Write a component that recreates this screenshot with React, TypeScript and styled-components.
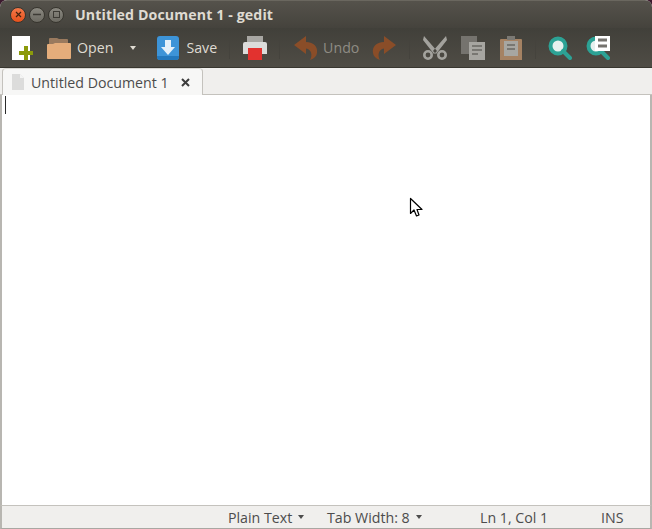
import React from 'react';
import styled, { createGlobalStyle } from 'styled-components';

const GlobalStyle = createGlobalStyle`
  html, body {
    margin: 0;
    padding: 0;
    background: #3c1a2e;
  }
  body {
    width: 652px;
    height: 529px;
    overflow: hidden;
    font-family: "Open Sans", "Noto Sans", sans-serif;
  }
`;

const Window = styled.div`
  position: relative;
  width: 652px;
  height: 529px;
  display: flex;
  flex-direction: column;
  border-radius: 7px 7px 0 0;
  overflow: hidden;
  background: #f2f1f0;
`;

const TitleBar = styled.div`
  height: 28px;
  flex: none;
  display: flex;
  align-items: center;
  padding: 0 0 0 10px;
  box-sizing: border-box;
  background: linear-gradient(#55524b, #45433d);
  border-top: 1px solid #6a675f;
`;

const WinButton = styled.div<{ $close?: boolean }>`
  width: 16px;
  height: 16px;
  box-sizing: border-box;
  margin-right: 3px;
  border-radius: 50%;
  display: flex;
  align-items: center;
  justify-content: center;
  border: 1px solid #38362f;
  background: ${(p) =>
    p.$close
      ? 'linear-gradient(#f4794a, #e6511c)'
      : 'linear-gradient(#8a8880, #6c6a62)'};
  svg {
    display: block;
  }
`;

const Title = styled.div`
  margin-left: 8px;
  color: #dfdbd2;
  font-size: 14.2px;
  font-weight: 700;
  letter-spacing: 0.1px;
  white-space: nowrap;
`;

const ToolBar = styled.div`
  height: 40px;
  flex: none;
  display: flex;
  align-items: center;
  padding-left: 12px;
  box-sizing: border-box;
  background: linear-gradient(#41403a, #4f4c45);
  border-bottom: 1px solid #38362f;
`;

const ToolIcon = styled.svg<{ $ml?: number }>`
  display: block;
  flex: none;
  margin-left: ${(p) => p.$ml ?? 0}px;
`;

const ToolLabel = styled.span<{ $ml: number; $dim?: boolean }>`
  margin-left: ${(p) => p.$ml}px;
  font-size: 14.2px;
  color: ${(p) => (p.$dim ? '#8f8c84' : '#dfdbd2')};
  white-space: nowrap;
`;

const ToolSeparator = styled.div<{ $ml: number }>`
  width: 1px;
  height: 22px;
  flex: none;
  margin-left: ${(p) => p.$ml}px;
  background: #45433d;
`;

const ToolCaret = styled.div`
  width: 0;
  height: 0;
  flex: none;
  margin-left: 17px;
  margin-top: 1px;
  border-left: 3.5px solid transparent;
  border-right: 3.5px solid transparent;
  border-top: 4px solid #dfdbd2;
`;

const TabBar = styled.div`
  position: relative;
  height: 27px;
  flex: none;
  display: flex;
  align-items: flex-end;
  box-sizing: border-box;
  padding-left: 2px;
  background: #f0efed;
  border-bottom: 1px solid #c4c2bd;
`;

const Tab = styled.div`
  width: 201px;
  height: 27px;
  margin-bottom: -1px;
  box-sizing: border-box;
  display: flex;
  align-items: center;
  padding-left: 9px;
  background: #f7f7f6;
  border: 1px solid #c4c2bd;
  border-bottom: none;
  border-top: 1px solid #d8d6d2;
  border-radius: 4px 4px 0 0;
  position: relative;
  z-index: 1;
`;

const TabLabel = styled.span`
  margin-left: 7px;
  font-size: 14.2px;
  color: #4c4c4c;
  white-space: nowrap;
`;

const TabClose = styled.svg`
  position: absolute;
  right: 12px;
  top: 9px;
`;

const Editor = styled.div`
  position: relative;
  flex: 1;
  background: #ffffff;
  border-left: 2px solid #b8b6b1;
  border-right: 2px solid #b8b6b1;
`;

const Caret = styled.div`
  position: absolute;
  left: 3px;
  top: 1px;
  width: 1px;
  height: 18px;
  background: #2b2b2b;
`;

const Pointer = styled.svg`
  position: absolute;
  left: 407px;
  top: 102px;
`;

const StatusBar = styled.div`
  height: 24px;
  flex: none;
  box-sizing: border-box;
  display: flex;
  align-items: center;
  padding-left: 226px;
  background: #f0efed;
  border-top: 1px solid #c4c2bd;
  border-bottom: 1px solid #a9a7a2;
  border-left: 2px solid #b8b6b1;
  border-right: 2px solid #b8b6b1;
`;

const StatusText = styled.span<{ $w: number }>`
  display: flex;
  align-items: center;
  width: ${(p) => p.$w}px;
  flex: none;
  font-size: 14.2px;
  color: #4c4c4c;
  white-space: nowrap;
`;

const StatusCaret = styled.span`
  width: 0;
  height: 0;
  margin-left: 6px;
  border-left: 3px solid transparent;
  border-right: 3px solid transparent;
  border-top: 4px solid #4c4c4c;
`;

export default function App() {
  return (
    <>
      <GlobalStyle />
      <Window>
        <TitleBar>
          <WinButton $close>
            <svg width="7" height="7" viewBox="0 0 7 7">
              <path d="M1 1l5 5M6 1L1 6" stroke="#43230f" strokeWidth="1.2" />
            </svg>
          </WinButton>
          <WinButton>
            <svg width="8" height="7" viewBox="0 0 8 7">
              <path d="M0 3.5h8" stroke="#3d3b35" strokeWidth="1.3" />
            </svg>
          </WinButton>
          <WinButton>
            <svg width="7" height="7" viewBox="0 0 7 7">
              <rect x="0.5" y="0.5" width="6" height="6" fill="none" stroke="#3d3b35" />
            </svg>
          </WinButton>
          <Title>Untitled Document 1 - gedit</Title>
        </TitleBar>

        <ToolBar>
          <ToolIcon width="22" height="24" viewBox="0 0 22 24">
            <path d="M0 0h18v24H0z" fill="#fff" />
            <path d="M7 15h5v-5h4v5h5v4h-5v5h-4v-5H7z" fill="#8b9a0a" />
          </ToolIcon>
          <ToolIcon $ml={13} width="24" height="24" viewBox="0 0 24 24">
            <path d="M2 3q0-1 1-1h7l2 1h8q1 0 1 1v6H2z" fill="#9a7a5e" />
            <path d="M0 9q0-1 1-1h5l2-1h15q1 0 1 1v14q0 1-1 1H1q-1 0-1-1z" fill="#e5ad7b" />
          </ToolIcon>
          <ToolLabel $ml={6}>Open</ToolLabel>
          <ToolCaret />
          <ToolIcon $ml={21} width="22" height="24" viewBox="0 0 22 24">
            <rect width="22" height="24" rx="3" fill="#3d94d8" />
            <path d="M0 20h22v1a3 3 0 0 1-3 3H3a3 3 0 0 1-3-3z" fill="#2378bd" />
            <path d="M8 4h6v7h4l-7 8-7-8h4z" fill="#e4f0f9" />
          </ToolIcon>
          <ToolLabel $ml={7}>Save</ToolLabel>
          <ToolSeparator $ml={12} />
          <ToolIcon $ml={13} width="24" height="24" viewBox="0 0 24 24">
            <path d="M4 0h16v7H4z" fill="#a8a7a3" />
            <path d="M2 6h20q2 0 2 2v10h-5v-6H5v6H0V8q0-2 2-2z" fill="#dcdcdb" />
            <path d="M5 12h14v12H5z" fill="#e2322f" />
          </ToolIcon>
          <ToolSeparator $ml={12} />
          <ToolIcon $ml={14} width="24" height="24" viewBox="0 0 24 24">
            <path d="M0 9 L12 0 V6 C20 6 24 11 23 17 C22.6 20 20.5 22.5 16 24 C18.5 20 18 13.5 12 12.5 V18 Z" fill="#8a4d28" />
          </ToolIcon>
          <ToolLabel $ml={5} $dim>Undo</ToolLabel>
          <ToolIcon $ml={13} width="24" height="24" viewBox="0 0 24 24">
            <path d="M24 9 L12 0 V6 C4 6 0 11 1 17 C1.4 20 3.500 22.5 8 24 C5.500 20 6 13.500 12 12.500 V18 Z" fill="#8a4d28" />
          </ToolIcon>
          <ToolSeparator $ml={13} />
          <ToolIcon $ml={13} width="24" height="24" viewBox="0 0 24 24">
            <path d="M1 0l13 15-3 3L0 4zM23 0L10 15l3 3L24 4z" fill="#a3a29d" />
            <circle cx="5" cy="19" r="3.700" fill="none" stroke="#a3a29d" strokeWidth="2.600" />
            <circle cx="19" cy="19" r="3.700" fill="none" stroke="#a3a29d" strokeWidth="2.600" />
          </ToolIcon>
          <ToolIcon $ml={14} width="24" height="24" viewBox="0 0 24 24">
            <path d="M0 0h16v18H0z" fill="#75736e" />
            <path d="M8 6h16v18H8z" fill="#a7a6a1" />
            <path d="M11 10h10M11 14h10M11 18h6" stroke="#6a6863" strokeWidth="1.500" />
          </ToolIcon>
          <ToolIcon $ml={15} width="22" height="24" viewBox="0 0 22 24">
            <path d="M1 3h20q1 0 1 1v20H0V4q0-1 1-1z" fill="#a58263" />
            <path d="M4 5h14v15H4z" fill="#a7a6a1" />
            <path d="M7 0h8v4h-8z" fill="#7b7974" />
            <path d="M7 9h8M7 13h8" stroke="#6a6863" strokeWidth="1.500" />
          </ToolIcon>
          <ToolSeparator $ml={13} />
          <ToolIcon $ml={12} width="24" height="24" viewBox="0 0 24 24">
            <circle cx="10" cy="10" r="7.500" fill="#e6f0ee" stroke="#2ca295" strokeWidth="4" />
            <path d="M15 15l7 7" stroke="#2ca295" strokeWidth="4" strokeLinecap="round" />
          </ToolIcon>
          <ToolIcon $ml={14} width="24" height="24" viewBox="0 0 24 24">
            <circle cx="10" cy="10" r="7.500" fill="#e6f0ee" stroke="#2ca295" strokeWidth="4" />
            <path d="M15 15l7 7" stroke="#2ca295" strokeWidth="4" strokeLinecap="round" />
            <path d="M9 0h15v15H9z" fill="#fff" />
            <path d="M12 4h9M12 10h9" stroke="#75736e" strokeWidth="3" />
          </ToolIcon>
        </ToolBar>

        <TabBar>
          <Tab>
            <svg width="12" height="16" viewBox="0 0 12 16">
              <path d="M0 0h8l4 4v12H0z" fill="#dcdcdb" />
              <path d="M8 0l4 4H8z" fill="#f4f4f3" />
            </svg>
            <TabLabel>Untitled Document 1</TabLabel>
            <TabClose width="9" height="9" viewBox="0 0 9 9">
              <path d="M1 1l7 7M8 1L1 8" stroke="#3c3c3c" strokeWidth="2" />
            </TabClose>
          </Tab>
        </TabBar>

        <Editor>
          <Caret />
          <Pointer width="14" height="22" viewBox="0 0 14 22">
            <path
              d="M1.500 1.500 V16.500 L5 13 L7.500 19 L10 18 L8 12.500 H13 Z"
              fill="#fff"
              stroke="#000"
              strokeWidth="1.200"
              strokeLinejoin="round"
            />
          </Pointer>
        </Editor>

        <StatusBar>
          <StatusText $w={99}>
            Plain Text
            <StatusCaret />
          </StatusText>
          <StatusText $w={153}>
            Tab Width: 8
            <StatusCaret />
          </StatusText>
          <StatusText $w={121}>Ln 1, Col 1</StatusText>
          <StatusText $w={30}>INS</StatusText>
        </StatusBar>
      </Window>
    </>
  );
}
